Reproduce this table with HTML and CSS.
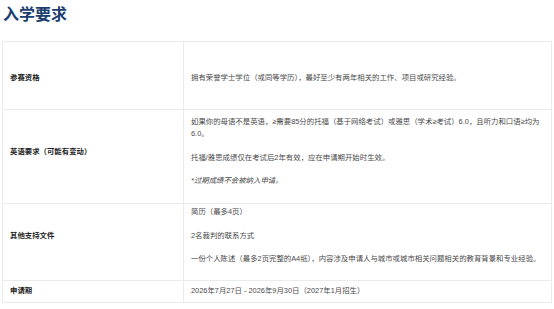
FILE: index.html
```html
<!DOCTYPE html>
<html lang="zh-CN">
<head>
<meta charset="utf-8">
<title>入学要求</title>
<link rel="stylesheet" href="styles.css">
</head>
<body>
<div class="page">
  <h2 class="title">入学要求</h2>
  <table class="req">
    <tr class="row-a">
      <th class="label">参赛资格</th>
      <td class="value"><p>拥有荣誉学士学位（或同等学历），最好至少有两年相关的工作、项目或研究经验。</p></td>
    </tr>
    <tr class="row-b">
      <th class="label">英语要求（可能有变动）</th>
      <td class="value">
        <p>如果你的母语不是英语，≥需要85分的托福（基于网络考试）或雅思（学术≥考试）6.0，且听力和口语≥均为6.0。</p>
        <p>托福/雅思成绩仅在考试后2年有效，应在申请期开始时生效。</p>
        <p><em>*过期成绩不会被纳入申请。</em></p>
      </td>
    </tr>
    <tr class="row-c">
      <th class="label">其他支持文件</th>
      <td class="value">
        <p>简历（最多4页）</p>
        <p>2名裁判的联系方式</p>
        <p>一份个人陈述（最多2页完整的A4纸），内容涉及申请人与城市或城市相关问题相关的教育背景和专业经验。</p>
      </td>
    </tr>
    <tr class="row-d">
      <th class="label">申请期</th>
      <td class="value"><p>2026年7月27日 - 2026年9月30日（2027年1月招生）</p></td>
    </tr>
  </table>
</div>
</body>
</html>
```

FILE: styles.css
```css
html, body {
  margin: 0;
  padding: 0;
  background: #ffffff;
}

.page {
  padding: 0 3px 0 2px;
  font-family: "Liberation Sans", "Noto Sans CJK SC", sans-serif;
}

.title {
  margin: 0;
  padding: 3px 0 0 1px;
  height: 41px;
  box-sizing: border-box;
  font-family: "Noto Sans CJK SC", sans-serif;
  font-size: 16px;
  line-height: 20px;
  font-weight: 700;
  color: #1c3f6f;
}

.req {
  width: 550px;
  border-collapse: collapse;
  border: 1px solid #ebebeb;
  font-size: 7.4px;
  line-height: 12px;
}

.req th,
.req td {
  border: 1px solid #ebebeb;
  vertical-align: middle;
  text-align: left;
  padding-left: 7px;
  padding-right: 2px;
}

.label {
  width: 171px;
  font-weight: 700;
  color: #222222;
}

.value {
  color: #4a4a4a;
}

.value p {
  margin: 0 0 11.5px;
}

.value p:last-child {
  margin-bottom: 0;
}

.value em {
  font-style: italic;
}

.row-a td, .row-a th { padding-top: 30px; padding-bottom: 25px; }
.row-b td, .row-b th { padding-top: 6px; padding-bottom: 16px; }
.row-c td, .row-c th { padding-top: 2px; padding-bottom: 15px; }
.row-d td, .row-d th { padding-top: 4px; padding-bottom: 5px; }
```
